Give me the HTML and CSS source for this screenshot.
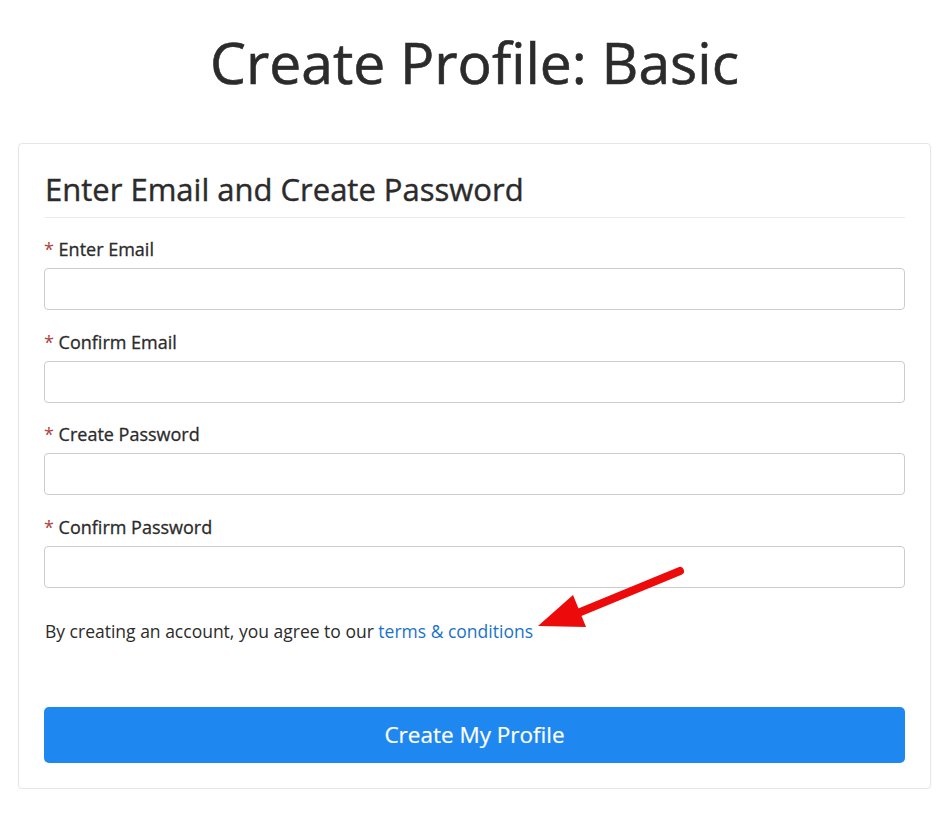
FILE: index.html
```html
<!DOCTYPE html>
<html>
<head>
<meta charset="utf-8">
<link rel="stylesheet" href="styles.css">
</head>
<body>
<div class="page">
  <h1 class="title">Create Profile: Basic</h1>
  <div class="card">
    <h2 class="card-title">Enter Email and Create Password</h2>
    <div class="field">
      <label class="label"><span class="req">*</span> Enter Email</label>
      <input class="input" type="text">
    </div>
    <div class="field">
      <label class="label"><span class="req">*</span> Confirm Email</label>
      <input class="input" type="text">
    </div>
    <div class="field">
      <label class="label"><span class="req">*</span> Create Password</label>
      <input class="input" type="password">
    </div>
    <div class="field">
      <label class="label"><span class="req">*</span> Confirm Password</label>
      <input class="input" type="password">
    </div>
    <p class="terms">By creating an account, you agree to our <a class="link" href="#">terms &amp; conditions</a></p>
    <button class="btn">Create My Profile</button>
    <svg class="arrow" width="948" height="815" viewBox="0 0 948 815">
      <line x1="680" y1="571" x2="578" y2="613" stroke="#ec0a0a" stroke-width="8" stroke-linecap="round"/>
      <polygon points="538,626 573,595 586,627" fill="#ec0a0a"/>
    </svg>
  </div>
</div>
</body>
</html>
```
FILE: styles.css
```css
* { box-sizing: border-box; }
html, body { margin: 0; padding: 0; background: #fff; }
body {
  font-family: "Open Sans", "Liberation Sans", sans-serif;
  color: #2b2b2b;
}
.page {
  padding: 0 17px 0 18px;
  position: relative;
}
.title {
  margin: 0;
  padding-top: 31px;
  height: 143px;
  font-size: 57px;
  line-height: 62px;
  font-weight: 400;
  -webkit-text-stroke: 0.6px #2b2b2b;
  text-align: center;
  color: #2b2b2b;
}
.card {
  border: 1px solid #e6e6e6;
  border-radius: 4px;
  padding: 26px 25px 25px 25px;
  box-shadow: 0 1px 2px rgba(0,0,0,0.04);
}
.card-title {
  margin: 0 0 0 1px;
  font-size: 31px;
  line-height: 38px;
  font-weight: 400;
  -webkit-text-stroke: 0.4px #2b2b2b;
  padding-bottom: 9px;
  border-bottom: 1px solid #eaeaea;
  color: #2b2b2b;
}
.field {
  display: flex;
  flex-direction: column;
  margin-top: 19px;
}
.field + .field { margin-top: 19.5px; }
.label {
  font-size: 18px;
  font-weight: 400;
  -webkit-text-stroke: 0.3px #2b2b2b;
  line-height: 24px;
  margin-bottom: 7px;
  color: #2b2b2b;
}
.req { color: #b0413e; -webkit-text-stroke: 0; }
.input {
  height: 42px;
  border: 1px solid #cccccc;
  border-radius: 4px;
  background: #fff;
  font: inherit;
}
.terms {
  margin: 31px 0 0 1px;
  font-size: 17.5px;
  line-height: 24px;
  color: #2b2b2b;
}
.link { color: #1a73c8; text-decoration: none; }
.btn {
  display: block;
  width: 100%;
  margin-top: 64px;
  height: 56px;
  border: none;
  border-radius: 5px;
  background: #1f88f0;
  color: #fff;
  font-family: "Open Sans", "Liberation Sans", sans-serif;
  font-size: 22.5px;
  font-weight: 400;
  -webkit-text-stroke: 0.2px #fff;
}
.arrow {
  position: absolute;
  left: 0;
  top: 0;
  pointer-events: none;
}
```
